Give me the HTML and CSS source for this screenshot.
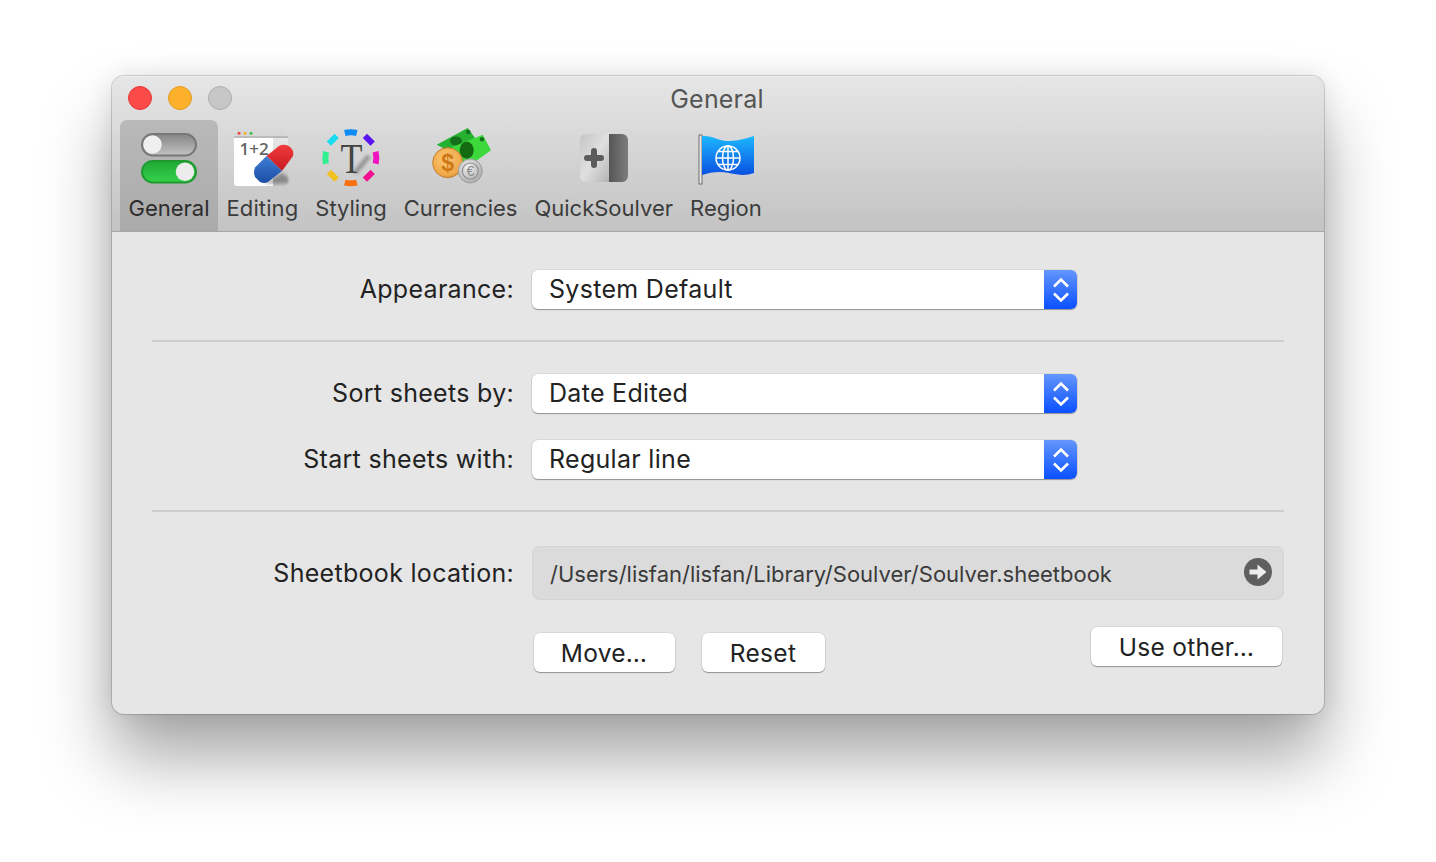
FILE: index.html
```html
<!DOCTYPE html>
<html lang="en">
<head>
    <meta charset="UTF-8">
    <title>General</title>
    <link rel="stylesheet" href="styles.css">
</head>
<body>
    <div class="window">
        <div class="header">
            <div class="titlebar">
                <div class="lights">
                    <span class="light red"></span>
                    <span class="light yellow"></span>
                    <span class="light gray"></span>
                </div>
                <div class="title">General</div>
            </div>
            <div class="toolbar">
                <div class="tab active">
                    <svg class="icon" viewBox="0 0 64 64">
                        <defs>
                            <linearGradient id="offBg" x1="0" y1="0" x2="0" y2="1"><stop offset="0" stop-color="#858585"/><stop offset="1" stop-color="#c2c2c2"/></linearGradient>
                            <linearGradient id="onBg" x1="0" y1="0" x2="0" y2="1"><stop offset="0" stop-color="#1fa833"/><stop offset="1" stop-color="#36d24c"/></linearGradient>
                        </defs>
                        <rect x="5" y="8" width="54" height="21.500" rx="10.750" fill="url(#offBg)" stroke="#777" stroke-width="2"/>
                        <circle cx="15.500" cy="18.500" r="9.300" fill="#f0f0f0"/>
                        <rect x="5" y="35" width="54" height="21.500" rx="10.750" fill="url(#onBg)" stroke="#1f9a30" stroke-width="2"/>
                        <circle cx="48" cy="45.750" r="9.300" fill="#ececec"/>
                    </svg>
                    <span class="tab-label">General</span>
                </div>
                <div class="tab tab-editing">
                    <svg class="icon" viewBox="0 0 64 64">
                        <defs>
                            <linearGradient id="eraserRed" x1="0" y1="0" x2="0" y2="1"><stop offset="0" stop-color="#f23a3a"/><stop offset="1" stop-color="#c41a22"/></linearGradient>
                            <linearGradient id="eraserBlue" x1="0" y1="0" x2="0" y2="1"><stop offset="0" stop-color="#3f7ed4"/><stop offset="1" stop-color="#1c4ea6"/></linearGradient>
                            <linearGradient id="pageSide" x1="0" y1="0" x2="0" y2="1"><stop offset="0" stop-color="#e8e8e8"/><stop offset="1" stop-color="#c0c0c0"/></linearGradient>
                            <filter id="eraserShadow" x="-30%" y="-50%" width="160%" height="200%"><feGaussianBlur stdDeviation="1.500"/></filter>
                        </defs>
                        <rect x="4" y="4" width="54" height="56" rx="3" fill="#fff"/>
                        <path d="M43 11h15v46a3 3 0 0 1-3 3H43z" fill="url(#pageSide)"/>
                        <path d="M4 7a3 3 0 0 1 3-3h48a3 3 0 0 1 3 3v4H4z" fill="#d8d8d8"/>
                        <rect x="4" y="10.500" width="54" height="1.200" fill="#a0a0a0"/>
                        <circle cx="9" cy="7.300" r="1.500" fill="#ee4444"/>
                        <circle cx="15" cy="7.300" r="1.500" fill="#f0b030"/>
                        <circle cx="21" cy="7.300" r="1.500" fill="#38c048"/>
                        <text class="icon-sum" x="9.500" y="28.500">1+2</text>
                        <path d="M34 58l18-11 6 4v6z" fill="#000" opacity=".3" filter="url(#eraserShadow)"/>
                        <path d="M36.500 30L49 20c3-1.800 8-1.500 11 1 3 2.500 4 6 3 9L52 45z" fill="url(#eraserRed)"/>
                        <path d="M36.500 30L52 45 38 56c-2.500 1.500-5.500 1.200-8 0l-4.500-4.500c-2-3-1.700-7-.5-10z" fill="url(#eraserBlue)"/>
                    </svg>
                    <span class="tab-label">Editing</span>
                </div>
                <div class="tab">
                    <svg class="icon" viewBox="0 0 64 64">
                        <defs>
                            <filter id="softShadow" x="-50%" y="-50%" width="200%" height="200%"><feGaussianBlur stdDeviation="1.800"/></filter>
                        </defs>
                        <g fill="none" stroke-width="6">
                            <path d="M25.800 7a25.500 25.500 0 0 1 12 0" stroke="#0c8cf4"/>
                            <path d="M45.900 9.900l7.800 7.800" stroke="#5a14f0"/>
                            <path d="M56.600 25.800a25.500 25.500 0 0 1 0 12" stroke="#f014c0"/>
                            <path d="M53.700 45.900l-7.800 7.800" stroke="#f01090"/>
                            <path d="M37.800 56.600a25.500 25.500 0 0 1-12 0" stroke="#f87010"/>
                            <path d="M17.700 53.700l-7.800-7.800" stroke="#f0c020"/>
                            <path d="M7 37.800a25.500 25.500 0 0 1 0-12" stroke="#30f090"/>
                            <path d="M9.900 17.700l7.800-7.800" stroke="#18dcf0"/>
                        </g>
                        <path d="M36 47l14-17" stroke="#000" stroke-width="5" opacity=".28" filter="url(#softShadow)"/>
                        <text class="icon-t" x="32.500" y="46.500" textLength="22" lengthAdjust="spacingAndGlyphs">T</text>
                    </svg>
                    <span class="tab-label">Styling</span>
                </div>
                <div class="tab">
                    <svg class="icon" viewBox="0 0 64 64">
                        <defs>
                            <radialGradient id="gold" cx=".45" cy=".4" r=".65"><stop offset="0" stop-color="#fcc878"/><stop offset=".8" stop-color="#f0a848"/><stop offset="1" stop-color="#c98432"/></radialGradient>
                            <radialGradient id="silver" cx=".4" cy=".35" r=".7"><stop offset="0" stop-color="#f0f0f0"/><stop offset="1" stop-color="#a8a8a8"/></radialGradient>
                        </defs>
                        <path d="M7.700 18.700L38.700 2 46 12 22 26z" fill="#26b030"/>
                        <circle cx="39.300" cy="6" r="2.300" fill="#14701c"/>
                        <ellipse cx="27" cy="15" rx="6" ry="4.500" fill="#14701c"/>
                        <path d="M21 22L53.700 8.700 62 24.300 38.700 41z" fill="#3cd83c"/>
                        <ellipse cx="37.700" cy="24.300" rx="7" ry="8.500" fill="#146a10"/>
                        <circle cx="53" cy="13.300" r="2.200" fill="#14701c"/>
                        <circle cx="18.700" cy="36.700" r="15" fill="url(#gold)" stroke="#c08030"/>
                        <text class="icon-dollar" x="18.700" y="44.500">$</text>
                        <circle cx="41.300" cy="45" r="12" fill="url(#silver)" stroke="#a0a0a0"/>
                        <circle cx="41.300" cy="45" r="8" fill="none" stroke="#8e8e8e" stroke-width="1.200"/>
                        <text class="icon-euro" x="41.300" y="50">€</text>
                    </svg>
                    <span class="tab-label">Currencies</span>
                </div>
                <div class="tab">
                    <svg class="icon" viewBox="0 0 64 64">
                        <defs>
                            <linearGradient id="qsLeft" x1="0" y1="0" x2="1" y2="1"><stop offset="0" stop-color="#c4c4c4"/><stop offset=".5" stop-color="#e0e0e0"/><stop offset="1" stop-color="#b4b4b4"/></linearGradient>
                            <linearGradient id="qsRight" x1="0" y1="0" x2="1" y2="0"><stop offset="0" stop-color="#565656"/><stop offset="1" stop-color="#7c7c7c"/></linearGradient>
                        </defs>
                        <path d="M37 8h13a6 6 0 0 1 6 6v36a6 6 0 0 1-6 6H37z" fill="url(#qsRight)"/>
                        <path d="M37 8H14a6 6 0 0 0-6 6v36a6 6 0 0 0 6 6h23z" fill="url(#qsLeft)"/>
                        <path d="M15 32h14M22 25v14" fill="none" stroke="#5c5c5c" stroke-width="6" stroke-linecap="round"/>
                    </svg>
                    <span class="tab-label">QuickSoulver</span>
                </div>
                <div class="tab">
                    <svg class="icon" viewBox="0 0 64 64">
                        <defs>
                            <linearGradient id="flag" x1="0" y1="0" x2="0" y2="1"><stop offset="0" stop-color="#1cb8ff"/><stop offset="1" stop-color="#0a50e0"/></linearGradient>
                        </defs>
                        <rect x="5" y="9" width="3" height="49" fill="#e8e8e8" stroke="#555" stroke-width=".8"/>
                        <path d="M8 10c10-1 16 5 27 5 9 0 18-3 25-5v37c-8 3-16 2-25 0-9-2-18-1-27 2z" fill="url(#flag)"/>
                        <g fill="none" stroke="#fff" stroke-width="1.500">
                            <circle cx="34" cy="32" r="12"/>
                            <ellipse cx="34" cy="32" rx="5.500" ry="12"/>
                            <path d="M34 20v24M22 32h24M24 25.500h20M24 38.500h20"/>
                        </g>
                    </svg>
                    <span class="tab-label">Region</span>
                </div>
            </div>
        </div>
        <div class="content">
            <div class="row">
                <label class="field-label">Appearance:</label>
                <div class="select">
                    <span class="select-value">System Default</span>
                    <span class="stepper"><svg viewBox="0 0 16 26"><path d="M1 9.500l7-7 7 7M1 16.500l7 7 7-7"/></svg></span>
                </div>
            </div>
            <hr class="divider">
            <div class="row">
                <label class="field-label">Sort sheets by:</label>
                <div class="select">
                    <span class="select-value">Date Edited</span>
                    <span class="stepper"><svg viewBox="0 0 16 26"><path d="M1 9.500l7-7 7 7M1 16.500l7 7 7-7"/></svg></span>
                </div>
            </div>
            <div class="row row-next">
                <label class="field-label">Start sheets with:</label>
                <div class="select">
                    <span class="select-value">Regular line</span>
                    <span class="stepper"><svg viewBox="0 0 16 26"><path d="M1 9.500l7-7 7 7M1 16.500l7 7 7-7"/></svg></span>
                </div>
            </div>
            <hr class="divider">
            <div class="row path-row">
                <label class="field-label">Sheetbook location:</label>
                <div class="path-box">
                    <span class="path-text">/Users/lisfan/lisfan/Library/Soulver/Soulver.sheetbook</span>
                    <svg class="path-arrow" viewBox="0 0 28 28"><circle cx="14" cy="14" r="14" fill="#5f5f5f"/><path d="M5.500 11.500h8V6.500l9 7.500-9 7.500v-5h-8z" fill="#eee"/></svg>
                </div>
            </div>
            <div class="actions">
                <button class="btn btn-move">Move…</button>
                <button class="btn btn-reset">Reset</button>
                <button class="btn btn-other">Use other…</button>
            </div>
        </div>
    </div>
</body>
</html>
```

FILE: styles.css
```css
html, body {
    margin: 0;
    padding: 0;
    background-color: #fff;
}
body {
    font-family: Inter, "Liberation Sans", sans-serif;
    color: #222;
    padding: 76px 0 0 112px;
    height: 786px;
    overflow: hidden;
}
.window {
    width: 1212px;
    height: 638px;
    border-radius: 12px;
    background-color: #e6e6e6;
    box-shadow: 0 0 0 1px rgba(0,0,0,0.16), 0 44px 68px rgba(0,0,0,0.35), 0 0 26px rgba(0,0,0,0.1);
    overflow: hidden;
}
.header {
    height: 155px;
    background: linear-gradient(#e6e6e6, #c3c3c3);
    border-bottom: 1px solid #a6a6a6;
    box-shadow: inset 0 1px 0 #f2f2f2;
}
.titlebar {
    position: relative;
    height: 44px;
}
.lights {
    position: absolute;
    left: 16px;
    top: 10px;
    display: flex;
    gap: 16px;
}
.light {
    width: 24px;
    height: 24px;
    border-radius: 50%;
    box-sizing: border-box;
}
.red { background-color: #fc4a49; border: 1px solid #e0393a; }
.yellow { background-color: #fdb12a; border: 1px solid #e09a20; }
.gray { background-color: #c6c6c6; border: 1px solid #aeaeae; }
.title {
    text-align: center;
    font-size: 25px;
    line-height: 46px;
    color: #555;
    letter-spacing: 0.2px;
    padding-right: 2px;
}
.toolbar {
    display: flex;
    padding-left: 8px;
    height: 111px;
}
.tab {
    display: flex;
    flex-direction: column;
    align-items: center;
    padding: 6px 8.5px 0;
    border-radius: 7px 7px 0 0;
}
.tab.active {
    background: linear-gradient(#b9b9b9, #abaaab);
}
.icon {
    width: 64px;
    height: 64px;
    flex-shrink: 0;
}
.tab-label {
    font-size: 22px;
    line-height: 26px;
    margin-top: 5px;
    color: #3c3c3c;
    white-space: nowrap;
}
.tab.active .tab-label {
    color: #2c2c2c;
}
.tab-editing .tab-label {
    letter-spacing: 0.1px;
}
.icon-sum {
    font-size: 17px;
    font-weight: 600;
    fill: #666;
    font-family: "Open Sans", sans-serif;
}
.icon-t {
    font-family: "Liberation Serif", serif;
    font-size: 42px;
    text-anchor: middle;
    fill: #444;
}
.icon-dollar {
    font-family: "Liberation Sans", sans-serif;
    font-weight: 700;
    font-size: 23px;
    text-anchor: middle;
    fill: #d07818;
}
.icon-euro {
    font-family: "Liberation Sans", sans-serif;
    font-size: 14px;
    text-anchor: middle;
    fill: #8a8a8a;
}
.content {
    padding: 37px 40px 0;
}
.row {
    display: flex;
    align-items: center;
}
.row-next {
    margin-top: 26px;
}
.path-row {
    margin-top: 34px;
}
.field-label {
    width: 362px;
    flex-shrink: 0;
    text-align: right;
    font-size: 25px;
    letter-spacing: 0.3px;
    color: #222;
    white-space: nowrap;
}
.select {
    margin: 1px 0 0 18px;
    width: 545px;
    height: 39px;
    box-sizing: border-box;
    display: flex;
    justify-content: space-between;
    background-color: #fff;
    border-radius: 6px;
    box-shadow: 0 0 0 0.5px rgba(0,0,0,0.12), 0 1px 1px rgba(0,0,0,0.32);
}
.select-value {
    font-size: 25px;
    letter-spacing: 0.3px;
    line-height: 38px;
    padding-left: 17px;
    color: #222;
}
.stepper {
    width: 33px;
    display: flex;
    align-items: center;
    justify-content: center;
    background: linear-gradient(#6496fc, #0a50ff);
    border-radius: 0 6px 6px 0;
}
.stepper svg {
    width: 16px;
    height: 26px;
    fill: none;
    stroke: #fff;
    stroke-width: 2.600;
}
.divider {
    border: 0;
    height: 2px;
    background-color: #cdcdcd;
    margin: 31px 0;
}
.divider + .path-row {
    margin-top: 34px;
}
.path-box {
    margin-left: 18px;
    width: 752px;
    height: 54px;
    box-sizing: border-box;
    display: flex;
    align-items: center;
    justify-content: space-between;
    padding: 0 11px 0 17px;
    background-color: #dbdbdb;
    border: 1px solid #d4d4d4;
    border-radius: 8px;
}
.path-text {
    font-size: 22px;
    color: #3a3a3a;
    white-space: nowrap;
    margin-top: 2px;
}
.path-arrow {
    width: 28px;
    height: 28px;
    margin-bottom: 2px;
}
.actions {
    display: flex;
    align-items: flex-start;
    padding: 27px 2px 0 381.500px;
}
.btn {
    height: 39px;
    padding: 0;
    font-family: inherit;
    font-size: 24.500px;
    letter-spacing: 0.3px;
    color: #222;
    background-color: #fff;
    border: 0;
    border-radius: 6px;
    box-shadow: 0 0 0 0.5px rgba(0,0,0,0.12), 0 1px 1px rgba(0,0,0,0.32);
}
.btn-move {
    width: 141px;
    margin-top: 6px;
}
.btn-reset {
    width: 123px;
    margin: 6px 0 0 27px;
}
.btn-other {
    width: 191px;
    margin-left: auto;
}
```
